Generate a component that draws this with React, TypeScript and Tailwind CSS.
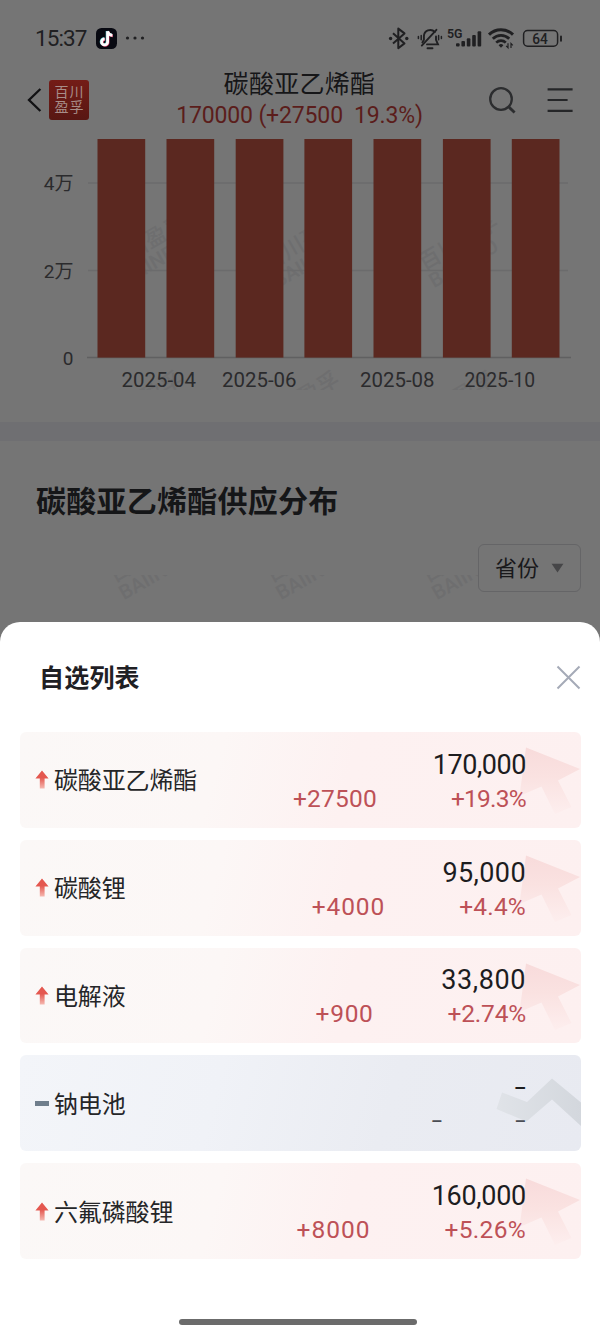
import React from "react";

const LATIN = "font-['Roboto','Noto_Sans_CJK_SC',sans-serif]";

type Trend = "up" | "flat";
type Item = {
  name: string;
  price: string;
  change: string;
  percent: string;
  trend: Trend;
  priceTrack: string;
  changeTrack: string;
  percentTrack: string;
};

const items: Item[] = [
  { name: "碳酸亚乙烯酯", price: "170,000", change: "+27500", percent: "+19.3%", trend: "up", priceTrack: "tracking-[-0.45px]", changeTrack: "tracking-[0.2px]", percentTrack: "tracking-[-0.75px]" },
  { name: "碳酸锂", price: "95,000", change: "+4000", percent: "+4.4%", trend: "up", priceTrack: "tracking-[0.4px]", changeTrack: "tracking-[0.9px]", percentTrack: "tracking-[0.2px]" },
  { name: "电解液", price: "33,800", change: "+900", percent: "+2.74%", trend: "up", priceTrack: "tracking-[0.6px]", changeTrack: "tracking-[0.7px]", percentTrack: "tracking-[-0.2px]" },
  { name: "钠电池", price: "–", change: "–", percent: "–", trend: "flat", priceTrack: "", changeTrack: "", percentTrack: "" },
  { name: "六氟磷酸锂", price: "160,000", change: "+8000", percent: "+5.26%", trend: "up", priceTrack: "tracking-[-0.3px]", changeTrack: "tracking-[1px]", percentTrack: "tracking-[0.3px]" },
];

function StatusIcons() {
  return (
    <svg width="178" height="28" viewBox="386 24 178 28" fill="none" stroke="#202022">
      <path d="M393 33.2l11.5 10.2-6.2 4.8V28.6l6.2 4.8L393 43.6" strokeWidth="2" strokeLinejoin="round" />
      <circle cx="390.6" cy="38.5" r="1.7" fill="#202022" stroke="none" />
      <circle cx="406.8" cy="38.5" r="1.7" fill="#202022" stroke="none" />
      <g strokeWidth="1.9" strokeLinecap="round">
        <path d="M434.8 32a6.3 6.3 0 0 0-10.9 4.2v3.6l-1.5 2.6" />
        <path d="M436 36.4v3.4l2 4.6h-11" />
        <path d="M421.8 45.6L436.4 29.8" />
        <path d="M427.5 48.2h5" />
        <path d="M421.2 35.4v4.4M418.4 36.6v2M438.6 35.4v4.4M441.4 36.6v2" strokeWidth="1.5" />
      </g>
      <g fill="#202022" stroke="none">
        <rect x="456" y="43.2" width="3.6" height="3.4" rx="1" />
        <rect x="461.4" y="41" width="3.6" height="5.6" rx="1" />
        <rect x="466.8" y="38.2" width="3.6" height="8.4" rx="1" />
        <rect x="472.2" y="35" width="3.6" height="11.6" rx="1" />
        <rect x="477.6" y="31.2" width="3.6" height="15.4" rx="1" />
      </g>
      <text x="447" y="37.8" fontSize="12" fontWeight="600" fill="#202022" stroke="none" textLength="15.5" lengthAdjust="spacingAndGlyphs" className={LATIN}>5G</text>
      <path d="M489 34.6a17 17 0 0 1 24 0" strokeWidth="3" />
      <path d="M492.8 38.8a11.6 11.6 0 0 1 16.4 0" strokeWidth="2.8" />
      <path d="M496.2 42.6a6.8 6.8 0 0 1 9.6 0" strokeWidth="2.6" />
      <path d="M498.6 45.2a3.4 3.4 0 0 1 4.8 0L501 47.8z" fill="#202022" stroke="none" />
      <path d="M508 43.2v4.6l-1.8-1.9M511 48v-4.6l1.8 1.9" strokeWidth="1.2" />
      <rect x="523.6" y="30.6" width="34" height="15.6" rx="4" strokeWidth="1.5" />
      <path d="M561 36.4v4.4" strokeWidth="1.9" strokeLinecap="round" />
      <text x="532.3" y="43.7" fontSize="14" fontWeight="500" fill="#202022" stroke="none" textLength="15.6" lengthAdjust="spacingAndGlyphs" className={LATIN}>64</text>
    </svg>
  );
}

function TikTok() {
  return (
    <svg width="21" height="21" viewBox="0 0 21 21">
      <rect width="21" height="21" rx="5.5" fill="#080911" />
      <g fill="none" strokeWidth="2.8">
        <path d="M11.1 3.1v10.6a3 3 0 1 1-3-3M11.1 3.1c.5 2.5 2.2 3.9 4.8 4.1" stroke="#55c9cf" />
        <path d="M12.1 3.8v10.6a3 3 0 1 1-3-3M12.1 3.8c.5 2.5 2.2 3.9 4.8 4.1" stroke="#d8406a" />
        <path d="M11.6 3.3v10.6a3 3 0 1 1-3-3M11.6 3.3c.5 2.5 2.2 3.9 4.8 4.1" stroke="#fff" />
      </g>
    </svg>
  );
}

function Header() {
  return (
    <header className="flex h-[77px] items-center justify-between pr-[27px] pl-[26px]">
      <div className="flex w-[140px] items-center gap-[7px]">
        <svg width="16" height="26" viewBox="0 0 16 26" fill="none" stroke="#111113" strokeWidth="2.3">
          <path d="M14.4 2L3 13l11.4 11" />
        </svg>
        <div className="flex h-10 w-10 flex-col items-center justify-center rounded-[3px] bg-linear-to-b from-[#741c17] to-[#581713] text-[14px] leading-[15px] tracking-[1px] text-[#a78d89]">
          <span className="pl-px">百川</span>
          <span className="pl-px">盈孚</span>
        </div>
      </div>
      <div className="flex flex-col items-center">
        <h1 className="text-[25px] leading-[31px] tracking-[0.3px] whitespace-nowrap text-[#161618]">碳酸亚乙烯酯</h1>
        <p className="text-[23px] leading-[31px] tracking-[-0.15px] whitespace-pre text-[#5b1d1b]">170000 (+27500  19.3%)</p>
      </div>
      <div className="flex w-[140px] items-center justify-end gap-[30px]">
        <svg width="30" height="30" viewBox="0 0 30 30" fill="none" stroke="#2c2d2f" strokeWidth="2.3">
          <circle cx="14" cy="14" r="10.8" />
          <path d="M21.4 21.6l6.2 6" strokeWidth="2.8" />
        </svg>
        <svg width="26" height="26" viewBox="0 0 26 26" fill="none" stroke="#252628" strokeWidth="2.2">
          <path d="M.6 2.4h25M.6 13h20M.6 23.8h25" />
        </svg>
      </div>
    </header>
  );
}

const bars = [97.5, 166.5, 235.7, 304.4, 373.5, 442.9, 511.8];
const months = [
  { x: 121.5, label: "2025-04" },
  { x: 222, label: "2025-06" },
  { x: 360, label: "2025-08" },
  { x: 464.5, label: "2025-10" },
];
const ticks = [
  { y: 183, label: "4万" },
  { y: 270.5, label: "2万" },
  { y: 357.5, label: "0" },
];

function Watermark({ x, y }: { x: number; y: number }) {
  return (
    <g transform={`translate(${x} ${y}) rotate(-30)`} fill="#6e6e6f" fontWeight="500">
      <text x="0" y="0" fontSize="22">百川盈孚</text>
      <text x="0" y="20" fontSize="20">BAIINFO</text>
    </g>
  );
}

function Chart() {
  return (
    <svg width="600" height="284" viewBox="0 138 600 284" className={LATIN}>
      <defs>
        <clipPath id="lowMarks">
          <rect x="0" y="366" width="600" height="24" />
        </clipPath>
      </defs>
      <Watermark x={112} y={271} />
      <Watermark x={268} y={271} />
      <Watermark x={424} y={271} />
      <g clipPath="url(#lowMarks)">
        <Watermark x={108} y={428} />
        <Watermark x={265} y={428} />
        <Watermark x={421} y={428} />
      </g>
      {ticks.map((t) => (
        <g key={t.label}>
          <path d={t.label === "0" ? "M87 357.5H571" : `M88 ${t.y}H568`} stroke={t.label === "0" ? "#606061" : "#6b6b6c"} strokeWidth="1.3" />
          <text x="73.5" y={t.y + 7} fontSize="19" textAnchor="end" fill="#2b2b2d">{t.label}</text>
        </g>
      ))}
      {bars.map((x) => (
        <rect key={x} x={x} y="139" width="47.7" height="218.6" fill="#5b2820" />
      ))}
      {months.map((m) => (
        <text key={m.label} x={m.x} y="386.8" fontSize="19.5" textLength={m.label === "2025-10" ? 70.5 : 74.5} lengthAdjust="spacingAndGlyphs" fill="#2b2b2d">{m.label}</text>
      ))}
    </svg>
  );
}

function Supply() {
  return (
    <section className="relative h-[181px] pt-[39px]">
      <svg className="absolute top-[134px] left-0" width="600" height="28" viewBox="0 575 600 28">
        <Watermark x={114} y={583} />
        <Watermark x={271} y={583} />
        <Watermark x={427} y={583} />
      </svg>
      <h2 className="pl-[36px] text-[30px] leading-[44px] font-bold tracking-[0.25px] text-[#151618]">碳酸亚乙烯酯供应分布</h2>
      <div className="relative mt-[20px] mr-[19px] ml-auto flex h-12 w-[103px] items-center justify-center gap-[12px] rounded-[6px] border-[1.5px] border-[#656567] bg-[#757575]">
        <span className="pt-[2px] text-[22px] leading-none text-[#19191b]">省份</span>
        <svg width="13" height="10" viewBox="0 0 13 10" fill="#464648">
          <path d="M.6.8h11.8L6.5 9.4z" />
        </svg>
      </div>
    </section>
  );
}

function UpArrow() {
  return (
    <svg width="14" height="19" viewBox="0 0 14 19">
      <defs>
        <linearGradient id="upArrow" x1="0" y1="0" x2="0" y2="1">
          <stop offset="0.4" stopColor="#e4574f" />
          <stop offset="1" stopColor="#f5b8b0" />
        </linearGradient>
      </defs>
      <path d="M7 .6L13.6 8.4H9.6V18.4H4.8V8.4H.4z" fill="url(#upArrow)" />
    </svg>
  );
}

function CardArt({ trend }: { trend: Trend }) {
  return (
    <svg className="absolute top-0 right-0" width="90" height="96" viewBox="491 0 90 96">
      <defs>
        <linearGradient id="artUp" x1="0" y1="0" x2="0" y2="1">
          <stop offset="0" stopColor="#f8dbdb" />
          <stop offset="0.45" stopColor="#fae2e1" />
          <stop offset="1" stopColor="#fdeeee" />
        </linearGradient>
        <linearGradient id="artFlat" x1="0" y1="0" x2="1" y2="0">
          <stop offset="0" stopColor="#e0e3e8" />
          <stop offset="1" stopColor="#d3d7dd" />
        </linearGradient>
      </defs>
      {trend === "up" ? (
        <path d="M526 15.4L580 37 558 48.5 571.5 75 555 82 541.5 54.5 519.5 64z" fill="url(#artUp)" />
      ) : (
        <path d="M502 37.5L527 47 552 23.5 581 47.5V71L552 44.5 526.5 66.5 496.5 54z" fill="url(#artFlat)" />
      )}
    </svg>
  );
}

function Card({ item }: { item: Item }) {
  const up = item.trend === "up";
  return (
    <li className={up
      ? "relative flex h-[95.8px] items-center overflow-hidden rounded-[6px] bg-linear-[105deg,#fbf8f7_0%,#fcf7f6_35%,#fdf1f1_58%,#fdf0f0_100%] pr-[55px] pl-[15px]"
      : "relative flex h-[95.8px] items-center overflow-hidden rounded-[6px] bg-linear-[105deg,#f3f5f9_0%,#f0f2f7_35%,#eaecf2_65%,#e8eaf1_100%] pr-[55px] pl-[15px]"}>
      <CardArt trend={item.trend} />
      <div className="flex flex-1 items-center gap-[5px]">
        {up ? <UpArrow /> : <span className="h-[5px] w-[14px] bg-[#6f7e8c]" />}
        <span className="pt-[3px] text-[24px] leading-none tracking-[-0.15px] text-[#252628]">{item.name}</span>
      </div>
      <div className="relative flex flex-col items-end pt-[4px]">
        <span className={`leading-[34px] text-[#1d1d1f] ${up ? "text-[27px]" : "text-[19px] font-bold"} ${item.priceTrack}`}>{item.price}</span>
        <div className={`flex leading-[34px] ${up ? "gap-[74px] text-[24.5px] text-[#bd5157]" : "gap-[72px] text-[18px] font-medium text-[#4a4d54]"}`}>
          <span className={item.changeTrack}>{item.change}</span>
          <span className={item.percentTrack}>{item.percent}</span>
        </div>
      </div>
    </li>
  );
}

export default function App() {
  return (
    <div className={`flex h-[1334px] w-[600px] flex-col overflow-hidden bg-[#757575] ${LATIN}`}>
      <div className="flex h-[61px] items-center justify-between pt-[15px] pr-[36px] pl-[35px]">
        <div className="flex items-center">
          <span className="w-[61px] pt-px text-[22.5px] leading-none tracking-[-0.9px] text-[#202022]">15:37</span>
          <TikTok />
          <svg className="ml-[8px]" width="20" height="4" viewBox="0 0 20 4" fill="#202022">
            <circle cx="2.5" cy="2" r="1.6" />
            <circle cx="10" cy="2" r="1.6" />
            <circle cx="17.5" cy="2" r="1.6" />
          </svg>
        </div>
        <StatusIcons />
      </div>
      <Header />
      <Chart />
      <div className="h-[19px] shrink-0 bg-[#6f6f72]" />
      <Supply />
      <section className="flex flex-1 flex-col rounded-t-[20px] bg-white">
        <div className="flex h-[110px] items-center justify-between pr-[19px] pl-[39px]">
          <h3 className="pt-[2px] text-[25px] leading-none font-bold tracking-[0.2px] text-[#1f2024]">自选列表</h3>
          <svg width="25" height="25" viewBox="0 0 25 25" fill="none" stroke="#a5aab7" strokeWidth="2">
            <path d="M1.5 1.5l22 22M23.5 1.5l-22 22" />
          </svg>
        </div>
        <ul className="flex flex-col gap-[12px] pr-[19px] pl-[20px]">
          {items.map((item) => (
            <Card key={item.name} item={item} />
          ))}
        </ul>
        <div className="mt-auto mb-[9px] ml-[179px] h-[6px] w-[238px] rounded-full bg-[#6b6b6b]" />
      </section>
    </div>
  );
}
